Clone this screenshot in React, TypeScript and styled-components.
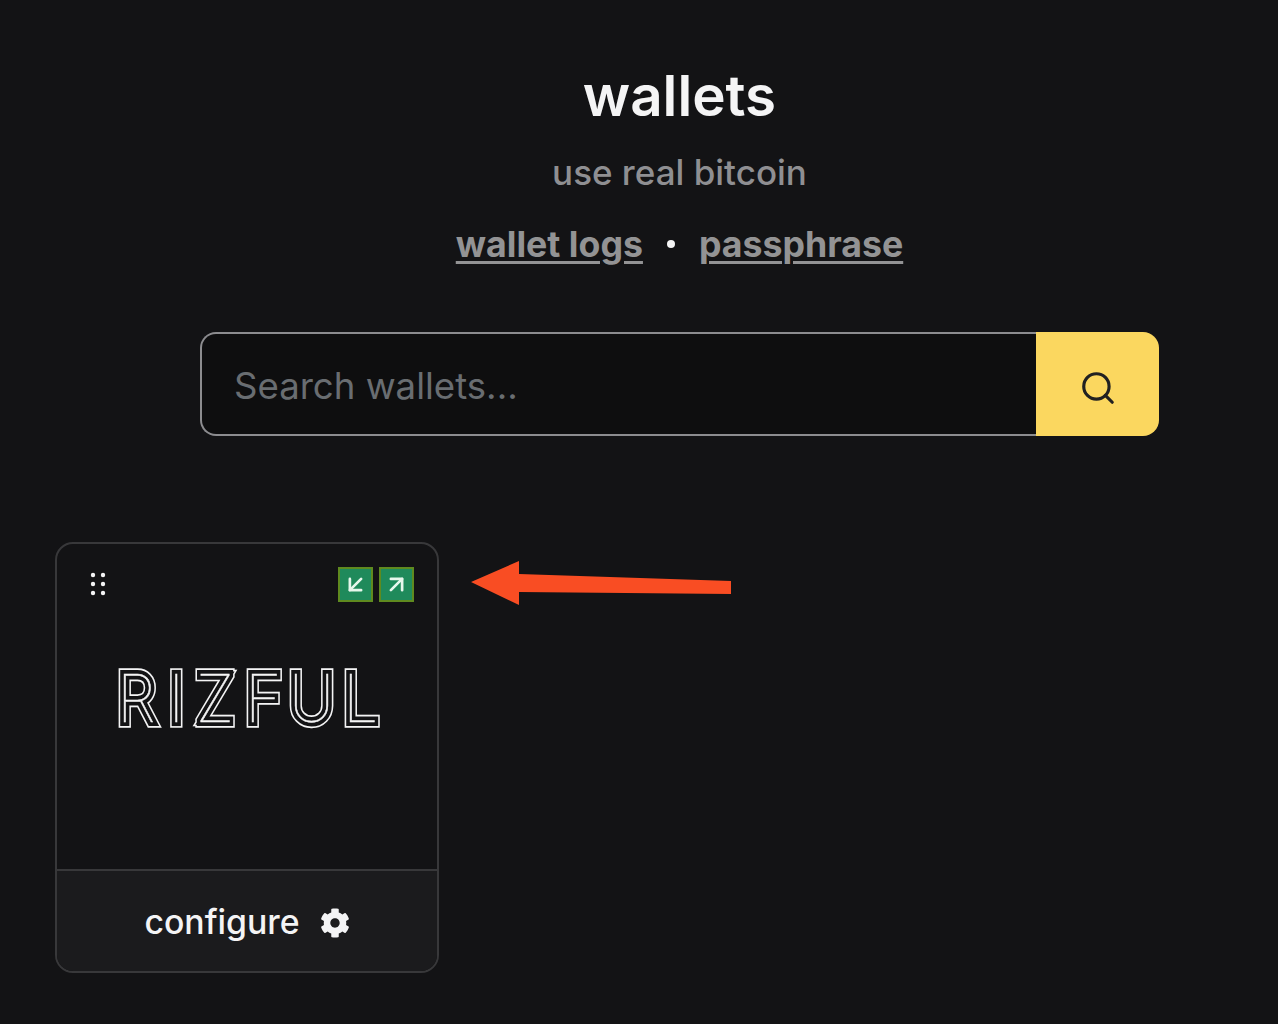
import React from 'react';
import styled, { createGlobalStyle } from 'styled-components';
import { ArrowDownLeft, ArrowUpRight, Search } from 'lucide-react';
import { FaCog } from 'react-icons/fa';

const GlobalStyle = createGlobalStyle`
	html, body {
		margin: 0;
		background: #131315;
		font-family: Inter, "Liberation Sans", sans-serif;
	}
`;

const Page = styled.div`
	position: relative;
	width: 1278px;
	height: 1024px;
	overflow: hidden;
`;

const Header = styled.header`
	display: flex;
	flex-direction: column;
	align-items: center;
	padding: 60px 0 0 81px;
`;

const Title = styled.h1`
	margin: 0;
	font-size: 56.5px;
	line-height: 72px;
	font-weight: 600;
	color: #f4f4f5;
`;

const Subtitle = styled.p`
	margin: 18px 0 0;
	font-size: 35px;
	line-height: 44px;
	font-weight: 500;
	color: #8f8f92;
`;

const Links = styled.nav`
	display: flex;
	align-items: center;
	gap: 24px;
	margin-top: 27px;
	height: 46px;
`;

const TextLink = styled.a`
	font-size: 35.7px;
	line-height: 46px;
	font-weight: 700;
	color: #939394;
	text-decoration: underline;
	text-decoration-thickness: 3px;
	text-underline-offset: 4px;
`;

const Dot = styled.span`
	width: 8px;
	height: 8px;
	border-radius: 50%;
	background: #f4f4f5;
`;

const SearchBar = styled.form`
	display: flex;
	width: 959px;
	height: 104px;
	margin-top: 65px;
`;

const SearchInput = styled.input`
	flex: 1;
	min-width: 0;
	box-sizing: border-box;
	padding: 4px 32px 0;
	background: #0e0e0f;
	border: 2px solid #8c8c8f;
	border-right: 0;
	border-radius: 16px 0 0 16px;
	outline: none;
	font-family: inherit;
	font-size: 36.6px;
	color: #f4f4f5;

	&::placeholder {
		color: #696d71;
		opacity: 1;
	}
`;

const SearchButton = styled.button`
	display: flex;
	align-items: center;
	justify-content: center;
	width: 123px;
	padding: 8px 0 0;
	background: #fbd75f;
	border: 0;
	border-radius: 0 16px 16px 0;
	color: #212121;
`;

const Cards = styled.section`
	display: flex;
	padding: 106px 0 0 55px;
`;

const Card = styled.article`
	display: flex;
	flex-direction: column;
	box-sizing: border-box;
	width: 384px;
	height: 431px;
	border: 2px solid #38383a;
	border-radius: 18px;
	overflow: hidden;
`;

const CardBody = styled.div`
	flex: 1;
	display: flex;
	flex-direction: column;
	padding: 23px 23px 0 32px;
`;

const CardTop = styled.div`
	display: flex;
	align-items: center;
	justify-content: space-between;
`;

const GripIcon = styled.svg`
	width: 18px;
	height: 26px;
	margin-top: -1px;
	fill: #f4f4f5;
`;

const ArrowButtons = styled.div`
	display: flex;
	gap: 6px;
`;

const ArrowButton = styled.button`
	display: flex;
	align-items: center;
	justify-content: center;
	box-sizing: border-box;
	width: 35px;
	height: 35px;
	padding: 0;
	background: #1f8a5b;
	border: 2px solid #5f8a1f;
	color: #e6f7ec;
`;

const LogoBox = styled.svg`
	display: block;
	width: 382px;
	height: 90px;
	margin: 43px 0 0 -32px;
	overflow: visible;
`;

const LogoText = styled.text<{ $stroke: string; $width: number }>`
	font-family: Inter, "Liberation Sans", sans-serif;
	font-size: 66px;
	font-weight: 100;
	fill: #f4f4f5;
	stroke: ${(p) => p.$stroke};
	stroke-width: ${(p) => p.$width}px;
	stroke-linejoin: miter;
`;

const CardFooter = styled.div`
	display: flex;
	align-items: center;
	justify-content: center;
	gap: 20px;
	height: 102px;
	box-sizing: border-box;
	background: #1b1b1d;
	border-top: 2px solid #38383a;
	color: #f4f4f5;
	font-size: 33.8px;
	font-weight: 500;
`;

const GearIcon = styled(FaCog)`
	width: 30px;
	height: 30px;
	margin-top: 4px;
`;

const Annotation = styled.svg`
	position: absolute;
	left: 460px;
	top: 550px;
	width: 280px;
	height: 65px;
	fill: #f94d23;
`;

// letters are squeezed a little, so the x list is in the scaled space
const letterX = '122.1 176.3 205.3 256.8 303.2 360';
const logoTransform = 'scale(0.95 1)';
const logoLayers: [string, number][] = [
	['#f4f4f5', 11.4],
	['#131315', 8.2],
];

const App = () => (
	<Page>
		<GlobalStyle />
		<Header>
			<Title>wallets</Title>
			<Subtitle>use real bitcoin</Subtitle>
			<Links>
				<TextLink>wallet logs</TextLink>
				<Dot />
				<TextLink>passphrase</TextLink>
			</Links>
			<SearchBar>
				<SearchInput placeholder="Search wallets..." />
				<SearchButton type="button">
					<Search size={38} strokeWidth={2} />
				</SearchButton>
			</SearchBar>
		</Header>
		<Cards>
			<Card>
				<CardBody>
					<CardTop>
						<GripIcon viewBox="0 0 18 26">
							<circle cx="4" cy="4" r="2.2" />
							<circle cx="14" cy="4" r="2.2" />
							<circle cx="4" cy="13" r="2.2" />
							<circle cx="14" cy="13" r="2.2" />
							<circle cx="4" cy="22" r="2.2" />
							<circle cx="14" cy="22" r="2.2" />
						</GripIcon>
						<ArrowButtons>
							<ArrowButton><ArrowDownLeft size={27} strokeWidth={2.4} /></ArrowButton>
							<ArrowButton><ArrowUpRight size={27} strokeWidth={2.4} /></ArrowButton>
						</ArrowButtons>
					</CardTop>
					<LogoBox viewBox="56 650 382 90">
						{logoLayers.map(([stroke, width]) => (
							<LogoText key={width} x={letterX} y="727" transform={logoTransform} $stroke={stroke} $width={width}>RIZFUL</LogoText>
						))}
						<LogoText x={letterX} y="727" transform={logoTransform} $stroke="#f4f4f5" $width={0.5}>RIZFUL</LogoText>
					</LogoBox>
				</CardBody>
				<CardFooter>
					configure
					<GearIcon />
				</CardFooter>
			</Card>
		</Cards>
		<Annotation viewBox="460 550 280 65">
			<polygon points="471,582 519,561 519,574 731,581 731,594 519,592 519,605" />
		</Annotation>
	</Page>
);

export default App;
